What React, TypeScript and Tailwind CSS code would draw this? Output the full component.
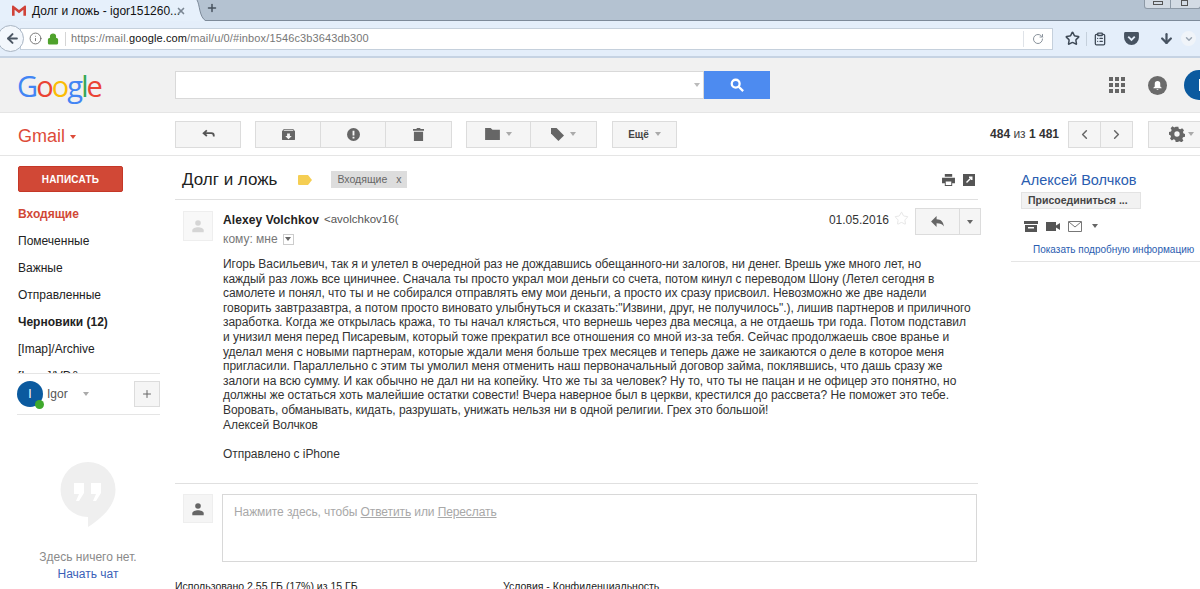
import { ReactNode } from "react";
import {
  ArrowLeft,
  ChevronDown,
  Info,
  Lock,
  RotateCw,
  Star,
  Plus,
  X,
  ClipboardList,
  ArrowDown,
  ChevronLeft,
  ChevronRight,
} from "lucide-react";

const bodyLines = [
  "Игорь Васильевич, так я и улетел в очередной раз не дождавшись обещанного-ни залогов, ни денег. Врешь уже много лет, но",
  "каждый раз ложь все циничнее. Сначала ты просто украл мои деньги со счета, потом кинул с переводом Шону (Летел сегодня в",
  "самолете и понял, что ты и не собирался отправлять ему мои деньги, а просто их сразу присвоил. Невозможно же две надели",
  "говорить завтразавтра, а потом просто виновато улыбнуться и сказать:\"Извини, друг, не получилось\".), лишив партнеров и приличного",
  "заработка. Когда же открылась кража, то ты начал клясться, что вернешь через два месяца, а не отдаешь три года. Потом подставил",
  "и унизил меня перед Писаревым, который тоже прекратил все отношения со мной из-за тебя. Сейчас продолжаешь свое вранье и",
  "уделал меня с новыми партнерам, которые ждали меня больше трех месяцев и теперь даже не заикаются о деле в которое меня",
  "пригласили. Параллельно с этим ты умолил меня отменить наш первоначальный договор займа, поклявшись, что дашь сразу же",
  "залоги на всю сумму. И как обычно не дал ни на копейку. Что же ты за человек? Ну то, что ты не пацан и не офицер это понятно, но",
  "должны же остаться хоть малейшие остатки совести! Вчера наверное был в церкви, крестился до рассвета? Не поможет это тебе.",
  "Воровать, обманывать, кидать, разрушать, унижать нельзя ни в одной религии. Грех это большой!",
  "Алексей Волчков",
];

const Caret = ({ className = "border-t-[#888]" }: { className?: string }) => (
  <span className={`inline-block w-0 h-0 border-x-[3px] border-x-transparent border-t-[4px] ${className}`} />
);

const ToolButton = ({ children, className = "" }: { children: ReactNode; className?: string }) => (
  <div className={`h-[27px] flex items-center justify-center gap-1.5 bg-[#f5f5f5] border border-[#dcdcdc] ${className}`}>
    {children}
  </div>
);

const PersonIcon = ({ color }: { color: string }) => (
  <svg viewBox="0 0 16 16" className="w-3.5 h-3.5" fill={color}>
    <circle cx="8" cy="4.5" r="3.2" />
    <path d="M1.5 15v-2.2C1.5 10.500 5 9.300 8 9.300s6.500 1.200 6.500 3.500V15z" />
  </svg>
);

const navItems = [
  { label: "Входящие", className: "text-[#d14836] font-bold" },
  { label: "Помеченные", className: "text-[#222]" },
  { label: "Важные", className: "text-[#222]" },
  { label: "Отправленные", className: "text-[#222]" },
  { label: "Черновики (12)", className: "text-[#222] font-bold" },
  { label: "[Imap]/Archive", className: "text-[#222]" },
  { label: "[Imap]/VD&", className: "text-[#222]" },
];

export default function App() {
  return (
    <div className="w-[1200px] h-[589px] overflow-hidden bg-white font-['Liberation_Sans',Arial,sans-serif] text-[12px] text-[#222]">
      {/* вкладки */}
      <div className="h-[21px] flex bg-[#b4c2d1] border-b border-[#7d8a99]">
        <div className="w-[197px] h-[21px] bg-[#e6f0fb] flex items-center pl-3 text-[#111] text-[12px] whitespace-nowrap">
          <svg viewBox="0 0 16 12" className="w-[14px] h-[11px] shrink-0">
            <path d="M0 1v11h3V5l5 4 5-4v7h3V1l-1-1-7 5.500L1 0z" fill="#d0433a" />
          </svg>
          <span className="ml-[6px] w-[144px]">Долг и ложь - igor151260...</span>
          <X className="w-[10px] h-[10px] text-[#7b8793]" strokeWidth={4} />
        </div>
        <svg viewBox="0 0 10 21" className="w-[10px] h-[21px] shrink-0 -ml-px">
          <path d="M0 0h1c3 5 2 17 9 21H0z" fill="#e6f0fb" />
          <path d="M1 0c3 5 2 17 9 21" stroke="#7d8a99" fill="none" />
        </svg>
        <Plus className="w-[12px] h-[12px] text-[#47525e] mt-[2px]" strokeWidth={3} />
        <div className="ml-auto mr-[-1px] w-[57px] h-[9px] flex bg-[#d3dbe4] border-x border-b border-[#8d99a6] rounded-b-[3px]">
          <div className="w-[26px] border-r border-[#8d99a6] flex justify-center items-start">
            <div className="w-[10px] h-[4px] border border-[#555] mt-[1px]" />
          </div>
          <div className="w-[26px] flex justify-center items-start">
            <div className="w-[7px] h-[6px] border border-[#555]" />
          </div>
        </div>
      </div>

      {/* адресная строка */}
      <div className="h-[37px] flex items-center bg-[#e4eefa] border-b-2 border-[#c6d3e3] relative">
        <div className="absolute -left-[3px] top-[4px] w-[27px] h-[27px] rounded-full bg-[#f3f7fc] border border-[#a9b5c3] flex items-center justify-center">
          <ArrowLeft className="w-[15px] h-[15px] text-[#4b5663] ml-[3px]" strokeWidth={3.2} />
        </div>
        <div className="ml-[20px] w-[1033px] h-[22px] bg-white border border-[#c5d0dc] flex items-center text-[11px] text-[#777] shrink-0">
          <Info className="ml-[8px] w-[13px] h-[13px] text-[#666]" strokeWidth={1.6} />
          <Lock className="ml-[5px] w-[12px] h-[12px] text-[#4fa22c] fill-[#4fa22c]" strokeWidth={2.4} />
          <div className="ml-[6px] h-[14px] border-l border-[#d5d5d5]" />
          <span className="ml-[5px] whitespace-nowrap tracking-[0.13px]">
            https://mail.<span className="text-[#111]">google.com</span>/mail/u/0/#inbox/1546c3b3643db300
          </span>
          <div className="ml-auto h-[16px] border-l border-[#dfe3e8]" />
          <RotateCw className="mx-[8px] w-[12px] h-[12px] text-[#8a939c]" strokeWidth={2} />
        </div>
        <Star className="ml-[12px] w-[15px] h-[15px] text-[#3f4a57]" strokeWidth={2.4} />
        <div className="ml-[6px] h-[14px] border-l border-[#c5d0dc]" />
        <ClipboardList className="ml-[6px] w-[14px] h-[14px] text-[#3f4a57]" strokeWidth={2.2} />
        <svg viewBox="0 0 16 14" className="ml-[17px] w-[15px] h-[13px]">
          <path d="M1.500 0h13A1.500 1.500 0 0 1 16 1.500V6a8 8 0 0 1-16 0V1.500A1.500 1.500 0 0 1 1.500 0z" fill="#475361" />
          <path d="M4.500 5 8 8.500 11.500 5" stroke="#e4eefa" strokeWidth="2" fill="none" />
        </svg>
        <ArrowDown className="ml-[20px] w-[15px] h-[15px] text-[#475361]" strokeWidth={3.6} />
        <div className="ml-[7px] w-[15px] h-[15px] rounded-full bg-[#f0f4f9] flex items-center justify-center">
          <ChevronDown className="w-[10px] h-[10px] text-[#9aa5b1]" strokeWidth={3.5} />
        </div>
      </div>

      {/* шапка Google */}
      <div className="h-[55px] bg-[#f1f1f1] border-b border-[#e5e5e5] flex items-center overflow-hidden">
        <div className="w-[175px] pl-[17px] text-[29px] leading-none font-medium font-['Open_Sans',sans-serif] tracking-[-1.9px] shrink-0">
          <span className="text-[#4285f4]">G</span>
          <span className="text-[#ea4335]">o</span>
          <span className="text-[#fbbc05]">o</span>
          <span className="text-[#4285f4]">g</span>
          <span className="text-[#34a853]">l</span>
          <span className="text-[#ea4335]">e</span>
        </div>
        <div className="w-[529px] h-[28px] bg-white border border-[#d9d9d9] flex items-center justify-end pr-[3px] shrink-0">
          <Caret className="border-t-[#bbb]" />
        </div>
        <div className="w-[66px] h-[28px] bg-[#4d8bf0] flex items-center justify-center shrink-0">
          <svg viewBox="0 0 16 16" className="w-[14px] h-[14px]" fill="none" stroke="#fff" strokeWidth="2.6">
            <circle cx="6.500" cy="6.500" r="4.500" />
            <path d="m10 10 5 5" />
          </svg>
        </div>
        <div className="ml-[339px] grid grid-cols-3 gap-[2px] w-[16px] shrink-0">
          {Array.from({ length: 9 }).map((_, i) => (
            <div key={i} className="w-[4px] h-[4px] bg-[#666]" />
          ))}
        </div>
        <div className="ml-[23px] w-[19px] h-[19px] rounded-full bg-[#6b6b6b] flex items-center justify-center shrink-0">
          <svg viewBox="0 0 12 12" className="w-[11px] h-[11px]" fill="#fff">
            <path d="M6 1a3 3 0 0 1 3 3v3l1.500 1.500v.5h-9v-.5L3 7V4a3 3 0 0 1 3-3zM5 10h2a1 1 0 0 1-2 0z" />
          </svg>
        </div>
        <div className="ml-[17px] w-[30px] h-[30px] rounded-full bg-[#0b5a9f] shrink-0 flex items-center">
          <div className="ml-[15px] w-[3px] h-[12px] bg-white" />
        </div>
      </div>

      {/* панель Gmail */}
      <div className="h-[43px] flex items-center border-b border-[#e5e5e5] text-[#666] overflow-hidden">
        <div className="w-[175px] pl-[18px] pt-[5px] text-[18px] text-[#dd4b39] flex items-center gap-[5px] shrink-0">
          Gmail <Caret className="border-t-[#dd4b39]" />
        </div>
        <ToolButton className="w-[66px]">
          <svg viewBox="0 0 16 12" className="w-[13px] h-[10px]" fill="none" stroke="#555" strokeWidth="2.200">
            <path d="M6 1.500 2 5l4 3.500M2 5h9.500c2 0 3 1 3 3v1" />
          </svg>
        </ToolButton>
        <div className="ml-[14px] flex shrink-0">
          <ToolButton className="w-[66px]">
            <svg viewBox="0 0 14 14" className="w-[13px] h-[13px]" fill="#666">
              <path d="M2 1h10l2 2.500V12a1 1 0 0 1-1 1H1a1 1 0 0 1-1-1V3.500zM5.500 6v2.500H3.500L7 12l3.500-3.500h-2V6zM1.500 3h11l-1-1h-9z" />
            </svg>
          </ToolButton>
          <ToolButton className="w-[65px] border-l-0">
            <svg viewBox="0 0 14 14" className="w-[13px] h-[13px]">
              <circle cx="7" cy="7" r="7" fill="#666" />
              <path d="M6 3h2v5H6zM6 9.300h2v2H6z" fill="#f5f5f5" />
            </svg>
          </ToolButton>
          <ToolButton className="w-[66px] border-l-0">
            <svg viewBox="0 0 12 14" className="w-[11px] h-[13px]" fill="#666">
              <path d="M4 0h4v1h4v2H0V1h4zM1 4h10v10H1z" />
            </svg>
          </ToolButton>
        </div>
        <div className="ml-[14px] flex shrink-0">
          <ToolButton className="w-[65px]">
            <svg viewBox="0 0 16 13" className="w-[15px] h-[12px]" fill="#666">
              <path d="M0 0h6l2 2h8v11H0z" />
            </svg>
            <Caret className="border-t-[#aaa]" />
          </ToolButton>
          <ToolButton className="w-[66px] border-l-0">
            <svg viewBox="0 0 14 14" className="w-[13px] h-[13px]" fill="#666">
              <path d="M0 0h6l8 8-6 6-8-8z" />
            </svg>
            <Caret className="border-t-[#aaa]" />
          </ToolButton>
        </div>
        <ToolButton className="ml-[15px] w-[65px] shrink-0 text-[10px] font-bold text-[#444]">
          Ещё <Caret className="border-t-[#aaa]" />
        </ToolButton>
        <span className="ml-auto text-[12px] text-[#333] font-bold whitespace-nowrap">
          484 <span className="font-normal text-[#444]">из</span> 1 481
        </span>
        <div className="ml-[9px] flex shrink-0">
          <ToolButton className="w-[33px]">
            <ChevronLeft className="w-[15px] h-[15px] text-[#666]" strokeWidth={2.4} />
          </ToolButton>
          <ToolButton className="w-[32px] border-l-0">
            <ChevronRight className="w-[15px] h-[15px] text-[#666]" strokeWidth={2.4} />
          </ToolButton>
        </div>
        <ToolButton className="ml-[15px] w-[53px] shrink-0 !justify-start pl-[20px] -mr-px border-r-0 !gap-[3px]">
          <svg viewBox="0 0 24 24" className="w-[16px] h-[16px] shrink-0" fill="#666">
            <path fillRule="evenodd" d="M10 1h4l.7 3 2.300 1 2.700-1.600 2.800 2.800L20.900 9l1 2.300 2.100.7v4l-3 .700-1 2.300 1.600 2.700-2.800 2.800-2.800-1.600-2.300.9L13 24h-3l-.7-3-2.300-1-2.700 1.600-2.800-2.800L3.100 16l-1-2.300L0 13V9l3-.7 1-2.300-1.600-2.700 2.800-2.800L7.900 2.100l1.400-.6zM12 8a4 4 0 1 0 0 8 4 4 0 0 0 0-8z" />
          </svg>
          <Caret className="border-t-[#aaa]" />
        </ToolButton>
      </div>

      {/* основная часть */}
      <div className="flex">
        {/* левая колонка */}
        <aside className="w-[175px] shrink-0 pl-[18px] pt-[10px]">
          <div className="w-[105px] h-[26px] bg-[#d14836] border border-[#c53727] rounded-[2px] flex items-center justify-center text-white text-[10px] font-bold tracking-[0.2px]">
            НАПИСАТЬ
          </div>
          <nav className="mt-[8px] h-[173px] overflow-hidden">
            {navItems.map((item) => (
              <div key={item.label} className={`h-[27px] flex items-center ${item.className}`}>
                {item.label}
              </div>
            ))}
          </nav>
          <div className="-ml-px w-[143px] h-[42px] border-y border-[#e5e5e5] flex items-center">
            <div className="relative w-[26px] h-[26px] rounded-full bg-[#0b5a9f] flex items-center justify-center text-white text-[12px]">
              I
              <span className="absolute -right-[1px] -bottom-[2px] w-[9px] h-[9px] rounded-full bg-[#3fa92c]" />
            </div>
            <span className="ml-[4px] text-[#555]">Igor</span>
            <Caret className="ml-[15px] border-t-[#aaa]" />
            <div className="ml-auto w-[26px] h-[26px] bg-[#f5f5f5] border border-[#dcdcdc] flex items-center justify-center">
              <Plus className="w-[12px] h-[12px] text-[#666]" strokeWidth={2} />
            </div>
          </div>
          <div className="w-[140px] flex flex-col items-center pt-[47px] text-[#8a8a8a]">
            <svg viewBox="0 0 56 66" className="w-[56px] h-[66px]">
              <path d="M28 0a27.500 27.500 0 0 1 27.500 27.500C55.500 45 40 57 28 65V55A27.500 27.500 0 0 1 28 0z" fill="#efefef" />
              <path d="M14 21h10v10l-5 8h-3l3-7h-5zM31 21h10v10l-5 8h-3l3-7h-5z" fill="#fff" />
            </svg>
            <div className="mt-[20px] whitespace-nowrap">Здесь ничего нет.</div>
            <div className="mt-[-1px] text-[#3b5fb8]">Начать чат</div>
          </div>
        </aside>

        {/* письмо */}
        <main className="w-[803px] shrink-0">
          <div className="h-[44px] flex items-center border-b border-[#e0e0e0] pl-[7px] pt-[4px]">
            <span className="text-[17px] text-[#222] whitespace-nowrap">Долг и ложь</span>
            <svg viewBox="0 0 14 10" className="ml-[21px] w-[14px] h-[10px]">
              <path d="M0 1a1 1 0 0 1 1-1h9l4 5-4 5H1a1 1 0 0 1-1-1z" fill="#f5ce53" />
            </svg>
            <div className="ml-[19px] w-[76px] h-[17px] bg-[#dddddd] flex items-center justify-between px-[6px] text-[10.500px] text-[#666]">
              <span>Входящие</span>
              <span>x</span>
            </div>
            <svg viewBox="0 0 14 13" className="ml-auto w-[13px] h-[12px]" fill="#555">
              <path d="M3 0h8v3H3zM0 4h14v6h-3v3H3v-3H0zM4 8v4h6V8z" />
            </svg>
            <svg viewBox="0 0 12 12" className="ml-[8px] mr-[3px] w-[12px] h-[12px]" fill="#555">
              <path fillRule="evenodd" d="M0 0h12v12H0zM6 2.500v1.500h1L3 8l1 1 4-4v1h1.500V2.500z" />
            </svg>
          </div>

          <div className="flex pl-[8px] pt-[8px] h-[52px]">
            <div className="w-[30px] h-[30px] mt-[3px] bg-[#f8f8f8] border border-[#eeeeee] flex items-center justify-center">
              <PersonIcon color="#d5d5d5" />
            </div>
            <div className="ml-[10px] w-[176px] shrink-0">
              <div className="h-[22px] pt-[1px] flex items-center whitespace-nowrap overflow-hidden text-[12px]">
                <span className="font-bold text-[#222] tracking-[0.1px]">Alexey Volchkov</span>
                <span className="ml-[5px] text-[#555] text-[11.500px]">&lt;avolchkov16(</span>
              </div>
              <div className="mt-[-1px] h-[20px] flex items-center text-[#777] whitespace-nowrap">
                кому: мне
                <span className="ml-[5px] w-[11px] h-[11px] border border-[#ccc] flex items-center justify-center">
                  <Caret className="border-t-[#666]" />
                </span>
              </div>
            </div>
            <div className="ml-auto flex items-start -mr-[3px]">
              <span className="mt-[3px] text-[#333]">01.05.2016</span>
              <Star className="ml-[5px] mt-[3px] w-[15px] h-[15px] text-[#dddddd]" strokeWidth={1.2} />
              <div className="ml-[6px] flex">
                <ToolButton className="w-[45px]">
                  <svg viewBox="0 0 14 12" className="w-[13px] h-[11px]" fill="#666">
                    <path d="M6 0v3.500c5 0 7.500 3 8 8-1.500-2.500-4-3.500-8-3.500v4L0 6z" />
                  </svg>
                </ToolButton>
                <ToolButton className="w-[21px] border-l-0">
                  <Caret className="border-t-[#666]" />
                </ToolButton>
              </div>
            </div>
          </div>

          <div className="pl-[48px] mt-[5px] leading-[14.6px] tracking-[-0.05px] text-[#333] whitespace-nowrap h-[226px]">
            {bodyLines.map((line) => (
              <div key={line}>{line}</div>
            ))}
            <div className="mt-[14.6px]">Отправлено с iPhone</div>
          </div>

          <div className="border-t border-[#e0e0e0] pt-[10px] pl-[8px] flex items-start">
            <div className="w-[30px] h-[29px] bg-[#f5f5f5] border border-[#eeeeee] flex items-center justify-center">
              <PersonIcon color="#666" />
            </div>
            <div className="ml-[9px] w-[755px] h-[68px] border border-[#d8d8d8] pl-[11px] pt-[8px] text-[#a8a8a8] tracking-[-0.1px] whitespace-nowrap">
              Нажмите здесь, чтобы <span className="underline">Ответить</span> или{" "}
              <span className="underline">Переслать</span>
            </div>
          </div>
          <div className="flex mt-[17px] text-[10.500px] text-[#222] whitespace-nowrap">
            <span className="w-[328px]">Использовано 2,55 ГБ (17%) из 15 ГБ</span>
            <span>Условия - Конфиденциальность</span>
          </div>
        </main>

        {/* контакт */}
        <aside className="ml-[33px] flex-1 min-w-0">
          <div className="pl-[10px] pt-[15px] h-[106px] border-b border-[#e5e5e5]">
            <div className="text-[14.500px] text-[#2a5db0] leading-[18px] whitespace-nowrap">Алексей Волчков</div>
            <div className="mt-[3px] w-[120px] h-[17px] bg-[#f2f2f2] border border-[#e3e3e3] flex items-center pl-[6px] text-[10.500px] font-bold text-[#444] whitespace-nowrap">
              Присоединиться ...
            </div>
            <div className="mt-[11px] flex items-center pl-[3px] h-[12px]">
              <svg viewBox="0 0 14 11" className="w-[14px] h-[11px]" fill="#555">
                <path d="M0 0h14v3H0zM1 4h12v7H1zM4 6v1.500h6V6z" />
              </svg>
              <svg viewBox="0 0 14 11" className="ml-[8px] w-[14px] h-[11px]" fill="#555">
                <path d="M0 1h10v9H0zM10 4.500 14 2v7l-4-2.500z" />
              </svg>
              <svg viewBox="0 0 14 11" className="ml-[8px] w-[14px] h-[11px]" fill="none" stroke="#777">
                <path d="M.5.500h13v10H.5zM1 1l6 5 6-5" />
              </svg>
              <Caret className="ml-[10px] border-t-[#666]" />
            </div>
            <div className="mt-[10px] ml-[12px] text-[10px] text-[#2a5db0] whitespace-nowrap">Показать подробную информацию</div>
          </div>
        </aside>
      </div>
    </div>
  );
}
